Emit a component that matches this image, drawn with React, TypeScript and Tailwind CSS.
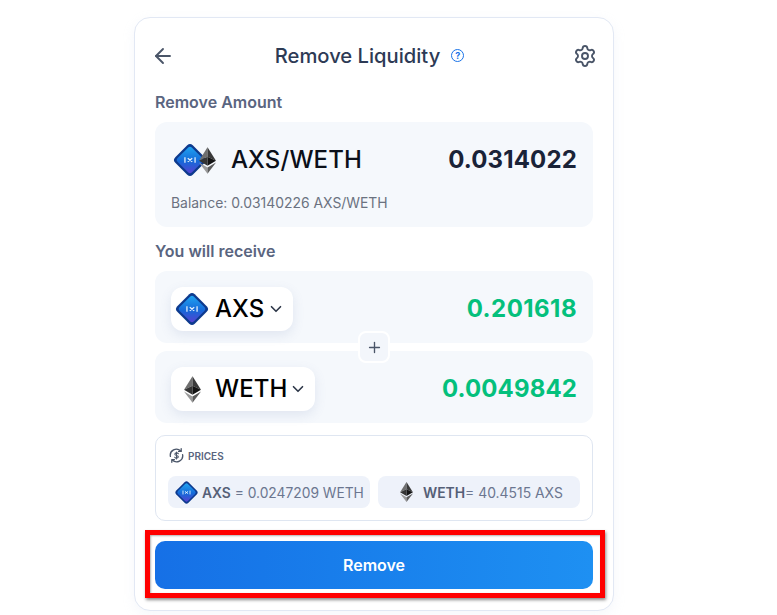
import React from "react";
import { ArrowLeft, ChevronDown, Plus, Settings } from "lucide-react";

function Axs({ size }: { size: number }) {
  return (
    <svg width={size} height={size} viewBox="0 0 32 32" className="shrink-0">
      <defs>
        <linearGradient id="axsg" x1="0" y1="0" x2="1" y2="1">
          <stop offset="0" stopColor="#1fa8f4" />
          <stop offset="0.55" stopColor="#1668d8" />
          <stop offset="1" stopColor="#5a3fd0" />
        </linearGradient>
      </defs>
      <rect x="5" y="5" width="22" height="22" rx="3.500" transform="rotate(45 16 16)" fill="#0d3a8e" />
      <rect x="7" y="7" width="18" height="18" rx="2.500" transform="rotate(45 16 16)" fill="url(#axsg)" />
      <path d="M11.500 13.500v5M20.500 13.500v5M14 14.500l4 3M18 14.500l-4 3" stroke="#e8f4ff" strokeWidth="1.100" fill="none" />
    </svg>
  );
}

function Eth({ w, h }: { w: number; h: number }) {
  return (
    <svg width={w} height={h} viewBox="0 0 18 28" className="shrink-0">
      <path d="M9 0 0 14.300 9 10Z" fill="#6f6f6f" />
      <path d="M9 0 18 14.300 9 10Z" fill="#3a3a3a" />
      <path d="M0 14.300 9 19.600V10Z" fill="#343434" />
      <path d="M18 14.300 9 19.600V10Z" fill="#141414" />
      <path d="M0 16.200 9 28V21.500Z" fill="#9a9a9a" />
      <path d="M18 16.200 9 28V21.500Z" fill="#5c5c5c" />
    </svg>
  );
}

function PriceIcon() {
  return (
    <svg width="15" height="15" viewBox="0 0 16 16" fill="none" stroke="#4a5568" strokeWidth="1.400" strokeLinecap="round" strokeLinejoin="round" className="ml-px shrink-0">
      <path d="M1.500 9A6.500 6.500 0 0 1 12.500 3.200" />
      <path d="M14.500 7A6.500 6.500 0 0 1 3.500 12.800" />
      <path d="M13 .800v2.800h-2.800M3 15.200v-2.800h2.800" />
      <path d="M10 6.200C9.700 5.500 9 5.200 8.100 5.200 7 5.200 6.200 5.700 6.200 6.600c0 1.800 3.800 1 3.800 2.800 0 .9-.9 1.400-1.900 1.400-.9 0-1.700-.3-2-1M8 4.200v7.600" strokeWidth="1.100" />
    </svg>
  );
}

function TokenRow({ icon, name, amount, chevron, tracking }: { icon: React.ReactNode; name: string; amount: string; chevron: string; tracking: string }) {
  return (
    <div className="flex h-[72px] items-start justify-between rounded-[12px] bg-[#f5f8fc] px-4 pt-4">
      <div className="flex h-11 items-center rounded-[12px] bg-white pl-[3px] pr-2 shadow-[0_4px_12px_rgba(100,120,170,0.14)]">
        {icon}
        <span className="ml-[5px] text-[24px] font-medium leading-none tracking-[0.1px] text-black">{name}</span>
        <ChevronDown size={18} strokeWidth={2.2} className={`text-[#2d3748] ${chevron}`} />
      </div>
      <span className={`mt-[10px] text-[24px] font-bold leading-6 text-[#04c07c] ${tracking}`}>{amount}</span>
    </div>
  );
}

export default function App() {
  return (
    <div className="relative h-[615px] w-[777px] overflow-hidden bg-white pl-[134px] pt-[17px] font-['Inter',sans-serif]">
      <div className="h-[594px] w-[480px] rounded-[16px] border border-[#e2e8f4] bg-white px-5 shadow-[0_4px_12px_rgba(200,212,235,0.18)]">
        <div className="flex h-[76px] items-center justify-between">
          <ArrowLeft size={24} strokeWidth={1.9} className="-ml-1 text-[#4a5568]" />
          <div className="mr-[9px] flex items-center">
            <span className="text-[20.2px] font-medium leading-none text-[#2d3a55]">Remove Liquidity</span>
            <span className="ml-[11px] flex h-[13px] w-[13px] items-center justify-center rounded-full border-[1.5px] border-[#1a73e8] text-[9px] font-bold leading-none text-[#1a73e8]">?</span>
          </div>
          <Settings size={24} strokeWidth={1.9} className="-mr-1 text-[#4a5568]" />
        </div>

        <div className="h-7 text-[16px] font-semibold leading-[17px] text-[#5a6580]">Remove Amount</div>

        <div className="flex h-[105px] flex-col rounded-[12px] bg-[#f5f8fc] px-4">
          <div className="flex h-[76px] items-center justify-between">
            <div className="flex items-center">
              <div className="flex w-[45px] items-center">
                <div className="ml-px"><Axs size={36} /></div>
                <div className="-ml-[9px]"><Eth w={17} h={27} /></div>
              </div>
              <span className="ml-[15px] text-[24px] font-medium leading-none tracking-[0.1px] text-[#0b0f19]">AXS/WETH</span>
            </div>
            <span className="text-[24px] font-bold leading-none tracking-[0.15px] text-[#1a2338]">0.0314022</span>
          </div>
          <div className="-mt-[4px] text-[13.9px] leading-[18px] text-[#6b7280]">Balance: 0.03140226 AXS/WETH</div>
        </div>

        <div className="flex h-[44px] items-center pt-[3px] text-[16px] font-semibold text-[#5a6580]">You will receive</div>

        <div className="relative flex flex-col gap-2">
          <TokenRow icon={<Axs size={36} />} name="AXS" amount="0.201618" chevron="ml-[3px]" tracking="tracking-[0.45px]" />
          <TokenRow icon={<div className="flex w-9 justify-center"><Eth w={17} h={27} /></div>} name="WETH" amount="0.0049842" chevron="ml-[2px]" tracking="tracking-[0.12px]" />
          <div className="absolute left-[203px] top-[60px] flex h-8 w-8 items-center justify-center rounded-[8px] border-[2px] border-white bg-[#f3f6fb]">
            <Plus size={17} strokeWidth={1.9} className="text-[#4a5568]" />
          </div>
        </div>

        <div className="mt-3 h-[86px] rounded-[10px] border border-[#dfe6f1] px-3 pt-2">
          <div className="flex h-[23px] items-center gap-[4px]">
            <PriceIcon />
            <span className="text-[10px] font-semibold leading-none text-[#5a6580]">PRICES</span>
          </div>
          <div className="mt-[9px] grid grid-cols-2 gap-2">
            <div className="flex h-8 items-center overflow-hidden rounded-[8px] bg-[#eef2fa] pl-[6px]">
              <Axs size={25} />
              <span className="ml-[3px] mt-[2px] whitespace-nowrap text-[13.8px] text-[#6b7690]"><b className="font-semibold text-[#556077]">AXS</b> = 0.0247209 WETH</span>
            </div>
            <div className="flex h-8 items-center rounded-[8px] bg-[#eef2fa] pl-[22px]">
              <Eth w={13} h={20} />
              <span className="ml-[10px] mt-[2px] whitespace-nowrap text-[13.9px] text-[#6b7690]"><b className="font-semibold text-[#556077]">WETH</b>= 40.4515 AXS</span>
            </div>
          </div>
        </div>

        <button className="mt-5 block h-12 w-full rounded-[10px] bg-gradient-to-r from-[#1670e6] to-[#1e90f2] text-[16px] font-semibold text-white">Remove</button>
      </div>

      <div className="absolute left-[145px] top-[530px] h-[68px] w-[460px] border-[5px] border-[#ff0000] shadow-[1px_2px_3px_rgba(0,0,0,0.45),inset_1px_1px_2px_rgba(0,0,0,0.3)]" />
    </div>
  );
}
